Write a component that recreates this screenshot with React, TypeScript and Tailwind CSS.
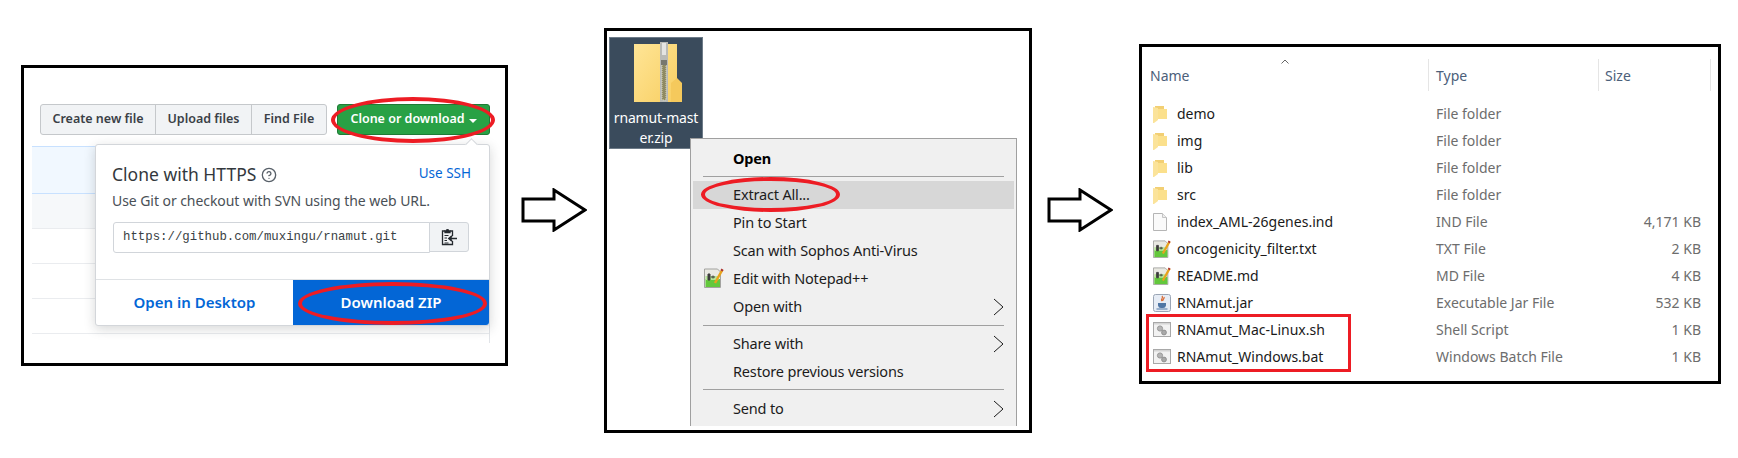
import { CircleHelp } from 'lucide-react';

const segoeLike = "font-['Noto_Sans',sans-serif]";

function Arrow() {
  return (
    <svg width="66" height="44" viewBox="0 0 66 44" className="block">
      <polygon points="2,11 33,11 33,2 64,22 33,42 33,33 2,33" fill="white" stroke="black" strokeWidth="3" />
    </svg>
  );
}

function ClipboardIcon() {
  return (
    <svg width="16" height="18" viewBox="0 0 16 18" fill="none" stroke="#24292e" strokeWidth="1.3">
      <path d="M4 3H1.5v13.5h10V13M11.5 8V3H9" />
      <path d="M4 4.5V3h1.2a1.3 1.3 0 0 1 2.6 0H9v1.5z" fill="#24292e" />
      <path d="M3.5 7.5h4M3.5 10h2.5M3.5 12.5h2.5M3.5 15h4" strokeWidth="1" />
      <path d="M16 10.5H8.5M11 8l-3 2.500 3 2.500" strokeWidth="1.700" />
    </svg>
  );
}

function ZipFolder() {
  return (
    <svg width="48" height="60" viewBox="0 0 48 60">
      <defs>
        <linearGradient id="zipBody" x1="0" y1="0" x2="1" y2="1">
          <stop offset="0" stopColor="#ffe596" />
          <stop offset="1" stopColor="#f8cf63" />
        </linearGradient>
      </defs>
      <path d="M0 2h43v58H0z" fill="url(#zipBody)" />
      <path d="M43 36l5 5v19H37V41z" fill="#f5c95c" />
      <path d="M26 0h8v60h-8z" fill="#b9bab6" />
      <path d="M28 1h4v12h-4z" fill="#e4e4e2" />
      <path d="M28 20h4v38h-4z" fill="#8f8a62" strokeDasharray="1 1" stroke="#d8d5b5" />
      <path d="M27 18h6v5h-6z" fill="#77786f" />
    </svg>
  );
}

function NotepadIcon({ size = 20 }: { size?: number }) {
  return (
    <svg width={size} height={size} viewBox="0 0 20 20">
      <path d="M0.500 1h13l3 3v15.500H0.500z" fill="#e9e9e2" stroke="#a3a3a0" />
      <path d="M1.500 11h14.500v8H1.500z" fill="#63c83c" />
      <path d="M1.500 8h13v4H1.500z" fill="#b5e596" />
      <path d="M4 6h2v6H4zM7 9h4M9 7.500v3" fill="#3c3c3c" stroke="#3c3c3c" />
      <path d="M18.500 1.500L11 15" stroke="#e8a31c" strokeWidth="2.500" />
      <path d="M17.500 0.500l2 1.500-1 1.500-2-1.300z" fill="#a8323a" />
    </svg>
  );
}

function FolderIcon() {
  return (
    <svg width="14" height="18" viewBox="0 0 14 18">
      <path d="M2 1h9v13H2z" fill="#f2cf73" />
      <path d="M0 2l5 1v12l-4 3H0z" fill="#fbe39a" />
      <path d="M5 4h9v10H5z" fill="#fbe08c" />
    </svg>
  );
}

function BlankFileIcon() {
  return (
    <svg width="14" height="18" viewBox="0 0 14 18">
      <path d="M0.500 0.500h9l4 4v13H0.500z" fill="#fafafa" stroke="#b5b5b5" />
      <path d="M9.500 0.500v4h4" fill="#eee" stroke="#c5c5c5" />
    </svg>
  );
}

function JarIcon() {
  return (
    <svg width="18" height="18" viewBox="0 0 18 18">
      <rect x="0.500" y="0.500" width="17" height="17" rx="2" fill="#e6ecf5" stroke="#9aa5b5" />
      <path d="M9 2c2 2-2 3 0 5M11 3c1 2-2 2-1 4" fill="none" stroke="#d9652b" strokeWidth="1.200" />
      <path d="M5 9h8v2.500a3 3 0 0 1-3 2.500H8a3 3 0 0 1-3-2.500z" fill="#4f76a5" />
      <path d="M3.500 15h11" stroke="#4f76a5" />
    </svg>
  );
}

function ScriptIcon() {
  return (
    <svg width="18" height="15" viewBox="0 0 18 15">
      <rect x="0.500" y="0.500" width="17" height="14" fill="#f2f2f2" stroke="#a8a8a8" />
      <path d="M1 1h16v1.500H1z" fill="#d5d5d5" />
      <circle cx="7" cy="6.500" r="2.600" fill="#b5b5b5" stroke="#9a9a9a" />
      <circle cx="11" cy="10.500" r="2.400" fill="#a9a9a9" stroke="#909090" />
    </svg>
  );
}

function Chevron() {
  return (
    <svg width="11" height="18" viewBox="0 0 11 18" fill="none" stroke="#1a1a1a">
      <path d="M1 1l9 8-9 8" />
    </svg>
  );
}

function MenuRow({ label, bold, active, arrow, icon }: { label: string; bold?: boolean; active?: boolean; arrow?: boolean; icon?: boolean }) {
  return (
    <div className={`relative mx-[2px] h-[28px] pl-[40px] pr-[10px] flex items-center justify-between ${active ? 'bg-[#d7d7d7]' : ''}`}>
      {icon && (
        <span className="absolute left-[11px] top-[3px]">
          <NotepadIcon />
        </span>
      )}
      <span className={bold ? 'font-bold text-black' : 'text-[#1c1c1c]'}>{label}</span>
      {arrow && <Chevron />}
    </div>
  );
}

function MenuSep({ className }: { className: string }) {
  return <div className={`mx-[12px] h-px bg-[#a0a0a0] ${className}`} />;
}

function GithubPanel() {
  return (
    <div className={`relative ml-[21px] mt-[65px] w-[487px] h-[301px] shrink-0 border-[3px] border-black bg-white text-[#24292e] ${segoeLike}`}>
      <div className="flex pt-[36px] pl-[16px] text-[12.500px] font-semibold">
        <div className="flex w-[287px] h-[31px] rounded-[3px] border border-[#c5c8cb] bg-[#f1f3f5] text-[#3a4046]">
          <div className="w-[115px] border-r border-[#c5c8cb] flex items-center justify-center">Create new file</div>
          <div className="w-[96px] border-r border-[#c5c8cb] flex items-center justify-center">Upload files</div>
          <div className="flex-1 flex items-center justify-center">Find File</div>
        </div>
        <div className="ml-[10px] w-[153px] h-[31px] rounded-[3px] bg-[#28a145] border border-[#1f7a35] text-white flex items-center justify-center gap-[4px]">
          Clone or download
          <span className="mt-[2px] border-x-[4px] border-t-[4px] border-x-transparent border-t-white" />
        </div>
      </div>

      <div className="ml-[8px] mt-[11px] w-[458px] h-[197px] border-r border-[#e1e4e8]">
        <div className="h-[48px] bg-[#f1f8ff] border-y border-[#c8e1ff]" />
        <div className="h-[35px] bg-[#f6f8fa] border-b border-[#eaecef]" />
        <div className="h-[35px] border-b border-[#eaecef]" />
        <div className="h-[35px] border-b border-[#eaecef]" />
        <div className="h-[35px] border-b border-[#eaecef]" />
      </div>

      {/* clone dropdown sits over the file table */}
      <div className="absolute left-[71px] top-[76px] w-[395px] h-[182px] rounded-[3px] border border-[#d3d6da] bg-white shadow-[0_3px_12px_rgba(27,31,35,0.18)] flex flex-col">
        <span className="absolute -top-[5px] right-[13px] w-[9px] h-[9px] rotate-45 bg-white border-l border-t border-[#d3d6da]" />
        <div className="flex justify-between pl-[16px] pr-[18px] pt-[16px]">
          <div className="flex items-center gap-[5px] text-[17.500px] leading-[26px] text-[#33383d]">
            Clone with HTTPS
            <CircleHelp size={16} strokeWidth={2} className="text-[#586069] mt-[2px]" />
          </div>
          <div className="text-[13.500px] leading-[24px] text-[#0366d6]">Use SSH</div>
        </div>
        <div className="pl-[16px] pt-[4px] text-[14px] leading-[20px] tracking-[-0.06px] text-[#4a5056]">Use Git or checkout with SVN using the web URL.</div>
        <div className="flex ml-[17px] mt-[11px] h-[31px] w-[356px]">
          <div className="w-[317px] border border-[#d1d5da] rounded-l-[3px] pl-[9px] flex items-center font-['Liberation_Mono',monospace] text-[12.370px] text-[#3a3f44]">
            https://github.com/muxingu/rnamut.git
          </div>
          <div className="-ml-px flex-1 h-[30px] border border-[#d1d5da] rounded-r-[3px] bg-[#f1f3f5] flex items-center justify-center">
            <ClipboardIcon />
          </div>
        </div>
        <div className="mt-auto h-[46px] flex border-t border-[#dfe2e5] font-semibold text-[15px]">
          <div className="w-[197px] flex items-center justify-center text-[#0366d6]">Open in Desktop</div>
          <div className="flex-1 bg-[#0366d6] text-white flex items-center justify-center rounded-br-[3px]">Download ZIP</div>
        </div>
      </div>

      <div className="absolute left-[307px] top-[29px] w-[164px] h-[46px] rounded-[50%] border-[4px] border-[#ed1c24]" />
      <div className="absolute left-[274px] top-[214px] w-[189px] h-[43px] rounded-[50%] border-[4px] border-[#ed1c24]" />
    </div>
  );
}

function ContextPanel() {
  return (
    <div className={`relative ml-[17px] mt-[28px] w-[428px] h-[405px] shrink-0 border-[3px] border-black bg-white ${segoeLike}`}>
      <div className="ml-[2px] mt-[6px] w-[94px] h-[112px] bg-[#3a4b5c] border border-[#6d7b88] text-white text-center text-[14px] tracking-[-0.17px] leading-[20px] whitespace-nowrap flex flex-col items-center">
        <div className="mt-[4px] ml-[4px] h-[64px]">
          <ZipFolder />
        </div>
        <div className="mt-[2px]">rnamut-mast</div>
        <div>er.zip</div>
      </div>

      {/* right click menu */}
      <div className="absolute left-[83px] top-[107px] w-[327px] h-[288px] border-x border-t border-[#a0a0a0] bg-[#f0f0f0] pt-[6px] text-[14.500px] tracking-[-0.17px]">
        <MenuRow label="Open" bold />
        <MenuSep className="mt-[3px] mb-[4px]" />
        <MenuRow label="Extract All..." active />
        <MenuRow label="Pin to Start" />
        <MenuRow label="Scan with Sophos Anti-Virus" />
        <MenuRow label="Edit with Notepad++" icon />
        <MenuRow label="Open with" arrow />
        <MenuSep className="mt-[4px] mb-[4px]" />
        <MenuRow label="Share with" arrow />
        <MenuRow label="Restore previous versions" />
        <MenuSep className="mt-[3px] mb-[5px]" />
        <MenuRow label="Send to" arrow />
      </div>

      <div className="absolute left-[94px] top-[146px] w-[139px] h-[35px] rounded-[50%] border-[4px] border-[#ed1c24]" />
    </div>
  );
}

const files = [
  { name: 'demo', type: 'File folder', size: '', icon: <FolderIcon /> },
  { name: 'img', type: 'File folder', size: '', icon: <FolderIcon /> },
  { name: 'lib', type: 'File folder', size: '', icon: <FolderIcon /> },
  { name: 'src', type: 'File folder', size: '', icon: <FolderIcon /> },
  { name: 'index_AML-26genes.ind', type: 'IND File', size: '4,171 KB', icon: <BlankFileIcon /> },
  { name: 'oncogenicity_filter.txt', type: 'TXT File', size: '2 KB', icon: <NotepadIcon size={18} /> },
  { name: 'README.md', type: 'MD File', size: '4 KB', icon: <NotepadIcon size={18} /> },
  { name: 'RNAmut.jar', type: 'Executable Jar File', size: '532 KB', icon: <JarIcon /> },
  { name: 'RNAmut_Mac-Linux.sh', type: 'Shell Script', size: '1 KB', icon: <ScriptIcon /> },
  { name: 'RNAmut_Windows.bat', type: 'Windows Batch File', size: '1 KB', icon: <ScriptIcon /> },
];

function ExplorerPanel() {
  return (
    <div className={`relative ml-[26px] mt-[44px] w-[582px] h-[340px] shrink-0 border-[3px] border-black bg-white text-[14px] ${segoeLike}`}>
      <div className="flex ml-[8px] mt-[12px] h-[32px] text-[#4c607a]">
        <div className="relative w-[279px] border-r border-[#e5e5e5] leading-[34px]">
          Name
          <svg width="8" height="5" viewBox="0 0 8 5" fill="none" stroke="#666" className="absolute left-[131px] top-[0px]">
            <path d="M0.500 4.500L4 1l3.500 3.500" />
          </svg>
        </div>
        <div className="w-[170px] pl-[7px] border-r border-[#e5e5e5] leading-[34px]">Type</div>
        <div className="w-[112px] pl-[6px] border-r border-[#e5e5e5] leading-[34px]">Size</div>
      </div>
      <div className="mt-[9px] ml-[8px]">
        {files.map((f) => (
          <div key={f.name} className="grid grid-cols-[286px_169px_96px] h-[27px] items-center">
            <div className="flex items-center text-[#1a1a1a]">
              <span className="w-[27px] flex justify-start pl-[3px]">{f.icon}</span>
              {f.name}
            </div>
            <div className="text-[#6d6d6d]">{f.type}</div>
            <div className="text-right text-[#6d6d6d]">{f.size}</div>
          </div>
        ))}
      </div>
      <div className="absolute left-[4px] top-[267px] w-[205px] h-[58px] border-[3px] border-[#ed1c24]" />
    </div>
  );
}

export default function App() {
  return (
    <div className="w-[1738px] h-[458px] bg-white flex items-start overflow-hidden">
      <GithubPanel />
      <div className="ml-[13px] mt-[188px] shrink-0">
        <Arrow />
      </div>
      <ContextPanel />
      <div className="ml-[15px] mt-[188px] shrink-0">
        <Arrow />
      </div>
      <ExplorerPanel />
    </div>
  );
}
